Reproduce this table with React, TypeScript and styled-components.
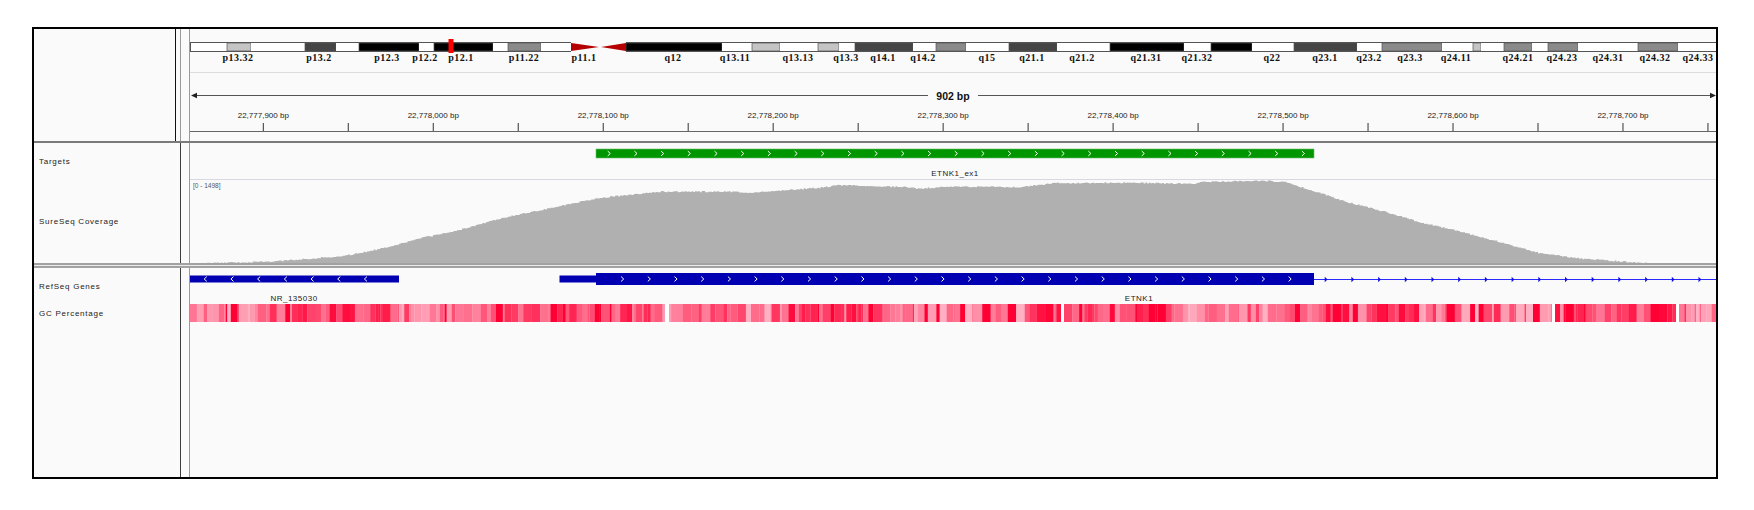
import * as React from 'react';
import styled, { createGlobalStyle } from 'styled-components';

const GlobalStyle = createGlobalStyle`
  html, body { margin: 0; padding: 0; background: #ffffff; }
  body { font-family: "Liberation Sans", Arial, sans-serif; }
`;

// page x where the data area content starts, and its width
const X0 = 190;
const DATA_W = 1526;
const px = (x: number) => x - X0;

const SANS = '"Liberation Sans", Arial, sans-serif';
const SERIF = '"Liberation Serif", "Times New Roman", serif';

// ---------- ideogram ----------
const WHITE = '#ffffff';
const LIGHT = '#c4c4c4';
const MID = '#8a8a8a';
const DARK = '#444444';
const BLACK = '#000000';

const bands: [number, number, string][] = [
  [189, 227, WHITE], [227, 251, LIGHT], [251, 305, WHITE], [305, 336, DARK],
  [336, 359, WHITE], [359, 419, BLACK], [419, 434, WHITE], [434, 493, BLACK],
  [493, 508, WHITE], [508, 541, MID], [541, 571, WHITE],
  [626, 722, BLACK], [722, 752, WHITE], [752, 780, LIGHT], [780, 818, WHITE],
  [818, 839, LIGHT], [839, 855, WHITE], [855, 913, DARK], [913, 936, WHITE],
  [936, 966, MID], [966, 1009, WHITE], [1009, 1057, DARK], [1057, 1110, WHITE],
  [1110, 1184, BLACK], [1184, 1211, WHITE], [1211, 1252, BLACK], [1252, 1294, WHITE],
  [1294, 1357, DARK], [1357, 1382, WHITE], [1382, 1442, MID], [1442, 1473, WHITE],
  [1473, 1481, LIGHT], [1481, 1504, WHITE], [1504, 1532, MID], [1532, 1548, WHITE],
  [1548, 1578, MID], [1578, 1638, WHITE], [1638, 1678, MID], [1678, 1716, WHITE],
];

const bandLabels: [string, number][] = [
  ['p13.32', 238], ['p13.2', 319], ['p12.3', 387], ['p12.2', 425], ['p12.1', 461],
  ['p11.22', 524], ['p11.1', 584], ['q12', 673], ['q13.11', 735], ['q13.13', 798],
  ['q13.3', 846], ['q14.1', 883], ['q14.2', 923], ['q15', 987], ['q21.1', 1032],
  ['q21.2', 1082], ['q21.31', 1146], ['q21.32', 1197], ['q22', 1272], ['q23.1', 1325],
  ['q23.2', 1369], ['q23.3', 1410], ['q24.11', 1456], ['q24.21', 1518], ['q24.23', 1562],
  ['q24.31', 1608], ['q24.32', 1655], ['q24.33', 1698],
];

// ---------- ruler ----------
const TICK0 = 263.3;
const TICK_STEP = 169.96;
const fmt = (n: number) => String(n).replace(/\B(?=(\d{3})+(?!\d))/g, ',');

// ---------- coverage ----------
const covPts: [number, number][] = [
  [190, 263.5], [268, 261.7], [344, 256], [383, 248], [421, 238], [459, 230],
  [497, 219], [551, 207.7], [598, 198], [660, 191.7], [732, 191.7], [751, 192.7],
  [828, 187], [836, 185], [904, 187], [920, 189], [943, 186.7], [1019, 187],
  [1057, 183], [1134, 182.7], [1192, 184], [1200, 182], [1261, 180.7], [1284, 182],
  [1315, 191.7], [1345, 201.7], [1384, 211.7], [1422, 223], [1460, 231.7],
  [1498, 241.7], [1537, 252.7], [1575, 258], [1613, 261], [1652, 263.3],
  [1682, 264], [1716, 264],
];

function mulberry(seed: number) {
  let a = seed;
  return () => {
    a |= 0; a = (a + 0x6d2b79f5) | 0;
    let t = Math.imul(a ^ (a >>> 15), 1 | a);
    t = (t + Math.imul(t ^ (t >>> 7), 61 | t)) ^ t;
    return ((t ^ (t >>> 14)) >>> 0) / 4294967296;
  };
}

function covY(x: number) {
  for (let i = 1; i < covPts.length; i++) {
    const [x1, y1] = covPts[i];
    const [x0, y0] = covPts[i - 1];
    if (x <= x1) return y0 + ((y1 - y0) * (x - x0)) / (x1 - x0);
  }
  return 264;
}

function coveragePath(top: number) {
  const rnd = mulberry(7);
  const step = 1.7;
  let d = `M0 ${264 - top}`;
  for (let x = X0; x < 1716; x += step) {
    const y = covY(x) + (rnd() - 0.5) * 1.2 - top;
    d += ` L${(x - X0).toFixed(1)} ${y.toFixed(1)} L${(x - X0 + step).toFixed(1)} ${y.toFixed(1)}`;
  }
  d += ` L${DATA_W} ${264 - top} Z`;
  return d;
}

// ---------- GC percentage ----------
const gcGaps: [number, number][] = [[665, 669], [1061, 1064], [1552, 1555], [1676, 1679]];

function gcStripes() {
  const rnd = mulberry(42);
  const out: { x: number; w: number; c: string }[] = [];
  let x = X0;
  while (x < 1716) {
    const w = 1.7 * (1 + Math.floor(rnd() * 5));
    const base = 0.5 + 0.16 * Math.sin(x / 41) + 0.1 * Math.sin(x / 13.7);
    let t = base + (rnd() - 0.5) * 0.75;
    if (rnd() < 0.07) t = 1;
    t = Math.max(0.1, Math.min(1, t));
    const c = `rgb(255,${Math.round(195 * (1 - t))},${Math.round(210 - 158 * t)})`;
    out.push({ x, w, c });
    x += w;
  }
  return out;
}
const STRIPES = gcStripes();

const range = (start: number, step: number, end: number) => {
  const r: number[] = [];
  for (let v = start; v <= end; v += step) r.push(v);
  return r;
};

// ---------- layout ----------
const Frame = styled.div`
  box-sizing: border-box;
  margin: 27px 0 0 32px;
  width: 1686px;
  height: 452px;
  border: 2px solid #000;
  background: #fafafa;
  display: flex;
  flex-direction: column;
`;

const Panel = styled.div<{ $h?: number }>`
  display: flex;
  flex: ${(p) => (p.$h ? `0 0 ${p.$h}px` : '1 1 auto')};
  min-height: 0;
`;

const NameCol = styled.div`
  flex: 0 0 146px;
  display: flex;
  flex-direction: column;
`;

const NameHeaderBox = styled.div`
  width: 141px;
  height: 100%;
  border-right: 1px solid #111;
  background: #fafafa;
`;

const Divider = styled.div<{ $tone: 'light' | 'dark' }>`
  flex: 0 0 1px;
  background: ${(p) => (p.$tone === 'dark' ? '#3c3c3c' : '#9a9a9a')};
`;

const Gutter = styled.div`
  flex: 0 0 8px;
  background: #fafafa;
`;

const DataCol = styled.div`
  flex: 0 0 ${DATA_W}px;
  border-left: 1px solid #9a9a9a;
  display: flex;
  flex-direction: column;
  overflow: hidden;
`;

const TrackName = styled.div<{ $h: number }>`
  flex: 0 0 ${(p) => p.$h}px;
  display: flex;
  align-items: center;
  padding-left: 5px;
  font-family: ${SANS};
  font-size: 8px;
  letter-spacing: 0.75px;
  color: #1a1a1a;
`;

const Separator = styled.div`
  flex: 0 0 2px;
  background: #7a7a7a;
`;

const DoubleSeparator = styled.div`
  flex: 0 0 1px;
  border-top: 2px solid #a2a2a2;
  border-bottom: 2px solid #a2a2a2;
  background: #e8e8e8;
`;

const Canvas = styled.svg`
  display: block;
  flex: 0 0 auto;
`;

const CoverageCanvas = styled(Canvas)`
  border-top: 1px solid #d8d8e2;
`;

// ---------- drawing pieces ----------
const Chevron = ({ x, y, dir }: { x: number; y: number; dir: 1 | -1 }) => (
  <polyline
    points={`${x - 1.3 * dir},${y - 2.4} ${x + 1.3 * dir},${y} ${x - 1.3 * dir},${y + 2.4}`}
    fill="none"
    stroke="#fff"
    strokeWidth={1}
  />
);

const HeaderDrawing = () => {
  const majors = range(0, 1, 8).map((k) => TICK0 + TICK_STEP * k);
  const minors = range(0, 1, 8).map((k) => TICK0 + TICK_STEP * (k + 0.5)).filter((x) => x < 1716);
  return (
    <Canvas width={DATA_W} height={112}>
      {bands.map(([a, b, c], i) => (
        <rect
          key={i}
          x={px(a)}
          y={14}
          width={b - a}
          height={8}
          fill={c}
          stroke={c === WHITE ? 'none' : '#555'}
          strokeWidth={0.7}
        />
      ))}
      <line x1={px(189)} x2={px(571)} y1={13.5} y2={13.5} stroke="#555" />
      <line x1={px(189)} x2={px(571)} y1={22.5} y2={22.5} stroke="#555" />
      <line x1={px(626)} x2={DATA_W} y1={13.5} y2={13.5} stroke="#555" />
      <line x1={px(626)} x2={DATA_W} y1={22.5} y2={22.5} stroke="#555" />
      <line x1={0.5} x2={0.5} y1={13.5} y2={22.5} stroke="#555" />
      <polygon points={`${px(571)},14 ${px(599)},18 ${px(571)},22`} fill="#b40000" />
      <polygon points={`${px(626)},14 ${px(601)},18 ${px(626)},22`} fill="#b40000" />
      <rect x={px(448.5)} y={10} width={5} height={14} fill="#ff0000" />
      {bandLabels.map(([t, x]) => (
        <text
          key={t}
          x={px(x)}
          y={31.5}
          textAnchor="middle"
          fontFamily={SERIF}
          fontWeight="bold"
          fontSize={10}
          letterSpacing={0.5}
          fill="#111"
        >
          {t}
        </text>
      ))}
      <line x1={0} x2={DATA_W} y1={43.5} y2={43.5} stroke="#dcdcdc" />

      <line x1={px(192)} x2={px(928)} y1={66.5} y2={66.5} stroke="#555" />
      <line x1={px(978)} x2={DATA_W - 2} y1={66.5} y2={66.5} stroke="#555" />
      <polygon points={`${px(191)},66.5 ${px(197)},63.8 ${px(197)},69.2`} fill="#222" />
      <polygon points={`${DATA_W},66.5 ${DATA_W - 6},63.8 ${DATA_W - 6},69.2`} fill="#222" />
      <text x={px(953)} y={70.5} textAnchor="middle" fontFamily={SANS} fontWeight="bold" fontSize={10.5} fill="#111">
        902 bp
      </text>

      {majors.map((x, k) => (
        <g key={k}>
          <text x={px(x)} y={89} textAnchor="middle" fontFamily={SANS} fontSize={8} fill="#222">
            {fmt(22777900 + 100 * k)} bp
          </text>
          <line x1={px(x)} x2={px(x)} y1={94} y2={102} stroke="#333" />
        </g>
      ))}
      {minors.map((x, k) => (
        <line key={k} x1={px(x)} x2={px(x)} y1={94} y2={102} stroke="#333" />
      ))}
      <line x1={0} x2={DATA_W} y1={102.5} y2={102.5} stroke="#666" />
    </Canvas>
  );
};

const TargetsDrawing = () => (
  <Canvas width={DATA_W} height={36}>
    <rect x={px(596)} y={6} width={1314 - 596} height={9} fill="#009600" stroke="#6cc06c" strokeWidth={0.6} />
    {range(609, 26.7, 1305).map((x) => (
      <Chevron key={x} x={px(x)} y={10.5} dir={1} />
    ))}
    <text x={px(955)} y={33} textAnchor="middle" fontFamily={SANS} fontSize={8} letterSpacing={0.5} fill="#222">
      ETNK1_ex1
    </text>
  </Canvas>
);

const CoverageDrawing = () => (
  <CoverageCanvas width={DATA_W} height={84}>
    <path d={coveragePath(180)} fill="#b0b0b0" />
    <text x={3} y={7.5} fontFamily={SANS} fontSize={6.5} fill="#555">
      [0 - 1498]
    </text>
  </CoverageCanvas>
);

const GenesDrawing = () => (
  <Canvas width={DATA_W} height={36}>
    <rect x={px(190)} y={7.5} width={399 - 190} height={7} fill="#0000b2" />
    {range(205.5, 26.7, 370).map((x) => (
      <Chevron key={x} x={px(x)} y={11} dir={-1} />
    ))}
    <text x={px(294)} y={33} textAnchor="middle" fontFamily={SANS} fontSize={8} letterSpacing={0.5} fill="#222">
      NR_135030
    </text>

    <rect x={px(559.5)} y={7.5} width={596 - 559.5} height={7} fill="#0000b2" />
    <rect x={px(596)} y={5} width={1314 - 596} height={12} fill="#0000b2" />
    {range(622.4, 26.7, 1292).map((x) => (
      <Chevron key={x} x={px(x)} y={11} dir={1} />
    ))}
    <line x1={px(1314)} x2={DATA_W} y1={11.5} y2={11.5} stroke="#2a2aff" strokeWidth={1.2} />
    {range(1326, 26.7, 1705).map((x) => (
      <polygon key={x} points={`${px(x) - 1.3},8.8 ${px(x) + 1.5},11.5 ${px(x) - 1.3},14.2`} fill="#1010e0" />
    ))}
    <text x={px(1139)} y={33} textAnchor="middle" fontFamily={SANS} fontSize={8} letterSpacing={0.5} fill="#222">
      ETNK1
    </text>
  </Canvas>
);

const GCDrawing = () => (
  <Canvas width={DATA_W} height={18}>
    {STRIPES.map((s, i) => (
      <rect key={i} x={px(s.x)} y={0} width={s.w + 0.2} height={18} fill={s.c} />
    ))}
    {gcGaps.map(([a, b]) => (
      <rect key={a} x={px(a)} y={0} width={b - a} height={18} fill="#ffffff" />
    ))}
  </Canvas>
);

export default function App() {
  return (
    <>
      <GlobalStyle />
      <Frame>
        <Panel $h={112}>
          <NameCol>
            <NameHeaderBox />
          </NameCol>
          <Divider $tone="light" />
          <Gutter />
          <DataCol>
            <HeaderDrawing />
          </DataCol>
        </Panel>
        <Separator />
        <Panel $h={120}>
          <NameCol>
            <TrackName $h={36}>Targets</TrackName>
            <TrackName $h={84}>SureSeq Coverage</TrackName>
          </NameCol>
          <Divider $tone="dark" />
          <Gutter />
          <DataCol>
            <TargetsDrawing />
            <CoverageDrawing />
          </DataCol>
        </Panel>
        <DoubleSeparator />
        <Panel>
          <NameCol>
            <TrackName $h={36}>RefSeq Genes</TrackName>
            <TrackName $h={18}>GC Percentage</TrackName>
          </NameCol>
          <Divider $tone="dark" />
          <Gutter />
          <DataCol>
            <GenesDrawing />
            <GCDrawing />
          </DataCol>
        </Panel>
      </Frame>
    </>
  );
}
